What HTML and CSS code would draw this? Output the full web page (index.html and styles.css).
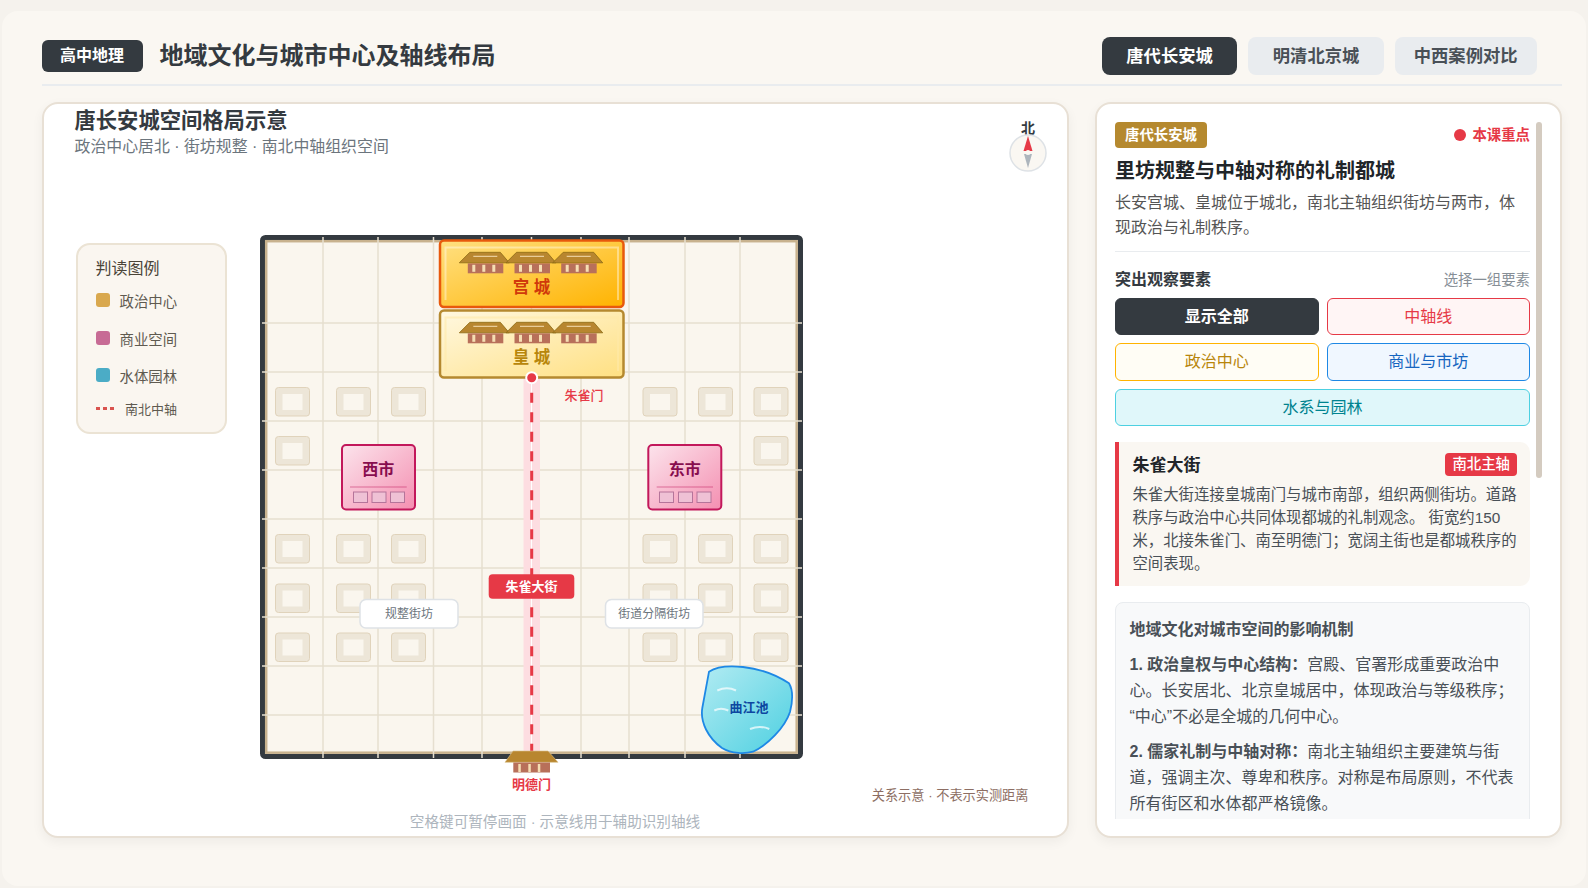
FILE: index.html
```html
<!DOCTYPE html>
<html lang="zh-CN">
<head>
  <meta charset="UTF-8">
  <meta name="viewport" content="width=device-width, initial-scale=1.0">
  <title>地域文化与城市中心及轴线布局</title>
  <link rel="stylesheet" href="styles.css">
</head>
<body>
  <div class="app">
    <!-- Header -->
    <header class="top-bar">
      <span class="subject-badge">高中地理</span>
      <h1 class="page-title">地域文化与城市中心及轴线布局</h1>
      <nav class="case-nav">
        <button class="case-btn active">唐代长安城</button>
        <button class="case-btn">明清北京城</button>
        <button class="case-btn">中西案例对比</button>
      </nav>
    </header>

    <main class="main-row">
      <!-- Map panel -->
      <section class="panel map-panel">
        <div class="map-head">
          <h2>唐长安城空间格局示意</h2>
          <p>政治中心居北 · 街坊规整 · 南北中轴组织空间</p>
        </div>

        <div class="compass">
          <span>北</span>
          <svg width="38" height="38" viewBox="0 0 38 38">
            <circle cx="19" cy="19" r="18" fill="#faf7f2" stroke="#dee2e6" stroke-width="1.5"/>
            <polygon points="19,2 23.5,17 14.5,17" fill="#e63946"/>
            <polygon points="19,34 23,20 15,20" fill="#adb5bd"/>
            <circle cx="19" cy="18.5" r="2.5" fill="#faf7f2"/>
          </svg>
        </div>

        <div class="map-stage">
          <aside class="legend">
            <h4>判读图例</h4>
            <div class="legend-item"><i class="swatch gold"></i><span>政治中心</span></div>
            <div class="legend-item"><i class="swatch rose"></i><span>商业空间</span></div>
            <div class="legend-item"><i class="swatch teal"></i><span>水体园林</span></div>
            <div class="legend-item axis-item"><i class="dash"></i><span>南北中轴</span></div>
          </aside>

          <svg class="city-map" width="547" height="562" viewBox="258 233 547 562">
            <defs>
              <linearGradient id="palaceFill" x1="0" y1="0" x2="1" y2="1">
                <stop offset="0" stop-color="#ffe082"/>
                <stop offset="1" stop-color="#ffb300"/>
              </linearGradient>
              <linearGradient id="imperialFill" x1="0" y1="0" x2="1" y2="1">
                <stop offset="0" stop-color="#fff8e1"/>
                <stop offset="1" stop-color="#ffe082"/>
              </linearGradient>
              <linearGradient id="marketFill" x1="0" y1="0" x2="1" y2="1">
                <stop offset="0" stop-color="#fce4ec"/>
                <stop offset="1" stop-color="#f48fb1"/>
              </linearGradient>
              <linearGradient id="pondFill" x1="0" y1="0" x2="1" y2="1">
                <stop offset="0" stop-color="#b2ebf2"/>
                <stop offset="1" stop-color="#4dd0e1"/>
              </linearGradient>
              <g id="ward">
                <rect x="0.5" y="0.5" width="34" height="28.5" rx="3" fill="#ede6d8" stroke="#e0d3bb"/>
                <rect x="7.5" y="7" width="20" height="16" fill="#faf6ee"/>
              </g>
              <g id="hall">
                <polygon points="10.5,0 41,0 50,10.5 0,10.5" fill="#b8862f" stroke="#8b6914" stroke-width="0.8"/>
                <line x1="14" y1="4" x2="38" y2="4" stroke="#f5deb3"/>
                <rect x="8.5" y="11" width="35.5" height="10" fill="#b8705a"/>
                <rect x="13" y="12.5" width="3" height="7" fill="#f5deb3"/>
                <rect x="23" y="12.5" width="3" height="7" fill="#f5deb3"/>
                <rect x="33" y="12.5" width="3" height="7" fill="#f5deb3"/>
              </g>
            </defs>

            <!-- city wall -->
            <rect x="262.5" y="237.5" width="538" height="519" rx="3" fill="#faf6ee" stroke="#343a40" stroke-width="5"/>
            <rect x="266.2" y="241.2" width="530.5" height="511.5" fill="none" stroke="#c8b28e" stroke-width="2.5"/>

            <!-- street grid -->
            <path class="grid-lines" d="M323 237V758M378 237V758M433.5 237V758M482 237V758M531.5 237V758M581 237V758M629 237V758M685 237V758M740 237V758M262 323H802M262 372H802M262 421H802M262 470H802M262 519H802M262 568H802M262 617H802M262 666H802M262 715H802"/>

            <!-- wards, west side -->
            <use href="#ward" x="275" y="387"/>
            <use href="#ward" x="336" y="387"/>
            <use href="#ward" x="391" y="387"/>
            <use href="#ward" x="275" y="436"/>
            <use href="#ward" x="275" y="534"/>
            <use href="#ward" x="336" y="534"/>
            <use href="#ward" x="391" y="534"/>
            <use href="#ward" x="275" y="583.5"/>
            <use href="#ward" x="336" y="583.5"/>
            <use href="#ward" x="391" y="583.5"/>
            <use href="#ward" x="275" y="632.5"/>
            <use href="#ward" x="336" y="632.5"/>
            <use href="#ward" x="391" y="632.5"/>

            <!-- wards, east side -->
            <use href="#ward" x="642.5" y="387"/>
            <use href="#ward" x="698" y="387"/>
            <use href="#ward" x="753.5" y="387"/>
            <use href="#ward" x="753.5" y="436"/>
            <use href="#ward" x="642.5" y="534"/>
            <use href="#ward" x="698" y="534"/>
            <use href="#ward" x="753.5" y="534"/>
            <use href="#ward" x="642.5" y="583.5"/>
            <use href="#ward" x="698" y="583.5"/>
            <use href="#ward" x="753.5" y="583.5"/>
            <use href="#ward" x="642.5" y="632.5"/>
            <use href="#ward" x="698" y="632.5"/>
            <use href="#ward" x="753.5" y="632.5"/>

            <!-- central axis -->
            <rect x="523.5" y="378" width="16.5" height="374" fill="#fddde1"/>
            <line x1="531.5" y1="378" x2="531.5" y2="752" stroke="#fff" stroke-width="1"/>
            <line x1="531.7" y1="392.7" x2="531.7" y2="752" stroke="#e63946" stroke-width="3" stroke-dasharray="10 9.5"/>

            <!-- palace city -->
            <rect x="440" y="240.5" width="183.5" height="66.5" rx="4" fill="url(#palaceFill)" stroke="#e8590c" stroke-width="2.5"/>
            <path d="M445.5 300V247.5H618V300" fill="none" stroke="#fff" stroke-opacity="0.4" stroke-width="2"/>
            <use href="#hall" x="459.3" y="252.3"/>
            <use href="#hall" x="506" y="252.3"/>
            <use href="#hall" x="552.7" y="252.3"/>
            <text class="t-palace" x="531.5" y="287">宫 城</text>

            <!-- imperial city -->
            <rect x="440" y="310.5" width="183.5" height="67" rx="4" fill="url(#imperialFill)" stroke="#b5892f" stroke-width="2.5"/>
            <path d="M445.5 371V317.5H618V371" fill="none" stroke="#ffe9a8" stroke-opacity="0.6" stroke-width="2"/>
            <use href="#hall" x="459.3" y="322.3"/>
            <use href="#hall" x="506" y="322.3"/>
            <use href="#hall" x="552.7" y="322.3"/>
            <text class="t-imperial" x="531.5" y="357">皇 城</text>

            <circle cx="531.7" cy="377.7" r="5.5" fill="#e63946" stroke="#fff" stroke-width="2"/>
            <text class="t-gate" x="584" y="395.7">朱雀门</text>

            <!-- markets -->
            <rect x="342" y="445" width="73" height="64.5" rx="4" fill="url(#marketFill)" stroke="#c2185b" stroke-width="2"/>
            <text class="t-market" x="378.3" y="469.5">西市</text>
            <line x1="350" y1="487" x2="406.7" y2="487" class="market-rule"/>
            <rect class="stall" x="353.5" y="492" width="14" height="10.5"/>
            <rect class="stall" x="372" y="492" width="14" height="10.5"/>
            <rect class="stall" x="390.5" y="492" width="14" height="10.5"/>

            <rect x="648.3" y="445" width="73" height="64.5" rx="4" fill="url(#marketFill)" stroke="#c2185b" stroke-width="2"/>
            <text class="t-market" x="684.8" y="469.5">东市</text>
            <line x1="656.7" y1="487" x2="713" y2="487" class="market-rule"/>
            <rect class="stall" x="659.5" y="492" width="14" height="10.5"/>
            <rect class="stall" x="678.5" y="492" width="14" height="10.5"/>
            <rect class="stall" x="697" y="492" width="14" height="10.5"/>

            <!-- street labels -->
            <rect x="488.7" y="574.3" width="85.6" height="24.4" rx="4" fill="#e63946"/>
            <text class="t-street" x="531.5" y="586.5">朱雀大街</text>
            <rect class="tag-box" x="360" y="599.5" width="98" height="28.5" rx="6"/>
            <text class="t-tag" x="409" y="613.7">规整街坊</text>
            <rect class="tag-box" x="605.5" y="599.5" width="97.5" height="28.5" rx="6"/>
            <text class="t-tag" x="654.2" y="613.7">街道分隔街坊</text>

            <!-- Qujiang pond -->
            <path d="M709 671.7C722 663 760 664 789 683.3C793 690 793 700 790 712C785 727 768 745 753 751.7C745 754 732 754 722 748C708 738 700 722 702.3 708Z" fill="url(#pondFill)" stroke="#1e88e5" stroke-width="1.8"/>
            <path class="wave" d="M717.3 690.5Q727 686 736 690.5M714.3 710.5Q721 707 728.3 710.5M750 729Q760 725 769.3 729"/>
            <text class="t-pond" x="749" y="707.5">曲江池</text>

            <!-- south gate -->
            <polygon points="513,751 548,751 558,762.3 505,762.3" fill="#b8862f" stroke="#d9c089" stroke-width="0.6"/>
            <rect x="513.3" y="762.5" width="36.7" height="10" fill="#b8705a"/>
            <rect x="518.3" y="764" width="2.5" height="8" fill="#f5deb3"/>
            <rect x="528.3" y="764" width="2.5" height="8" fill="#f5deb3"/>
            <rect x="537.8" y="764" width="2.5" height="8" fill="#f5deb3"/>
            <text class="t-south" x="531.5" y="784.5">明德门</text>
          </svg>
        </div>

        <p class="scale-note">关系示意 · 不表示实测距离</p>
        <p class="map-hint">空格键可暂停画面 · 示意线用于辅助识别轴线</p>
      </section>

      <!-- Side panel -->
      <section class="panel side-panel">
        <div class="side-scroll">
          <div class="side-top">
            <span class="era-tag">唐代长安城</span>
            <span class="key-point"><i></i>本课重点</span>
          </div>
          <h3 class="side-title">里坊规整与中轴对称的礼制都城</h3>
          <p class="side-desc">长安宫城、皇城位于城北&#xFF0C;南北主轴组织街坊与两市&#xFF0C;体现政治与礼制秩序。</p>

          <div class="filter-head">
            <strong>突出观察要素</strong>
            <span>选择一组要素</span>
          </div>
          <div class="filter-grid">
            <button class="filter-btn f-all">显示全部</button>
            <button class="filter-btn f-axis">中轴线</button>
            <button class="filter-btn f-politics">政治中心</button>
            <button class="filter-btn f-market">商业与市坊</button>
            <button class="filter-btn f-water">水系与园林</button>
          </div>

          <div class="info-card">
            <div class="info-card-head">
              <h4>朱雀大街</h4>
              <span>南北主轴</span>
            </div>
            <p>朱雀大街连接皇城南门与城市南部&#xFF0C;组织两侧街坊。道路秩序与政治中心共同体现都城的礼制观念。 街宽约150米&#xFF0C;北接朱雀门、南至明德门&#xFF1B;宽阔主街也是都城秩序的空间表现。</p>
          </div>

          <div class="mechanism">
            <h4>地域文化对城市空间的影响机制</h4>
            <p><b>1. 政治皇权与中心结构&#xFF1A;</b>宫殿、官署形成重要政治中心。长安居北、北京皇城居中&#xFF0C;体现政治与等级秩序&#xFF1B;“中心”不必是全城的几何中心。</p>
            <p><b>2. 儒家礼制与中轴对称&#xFF1A;</b>南北主轴组织主要建筑与街道&#xFF0C;强调主次、尊卑和秩序。对称是布局原则&#xFF0C;不代表所有街区和水体都严格镜像。</p>
          </div>
        </div>
        <div class="scroll-thumb"></div>
      </section>
    </main>
  </div>
</body>
</html>
```

FILE: styles.css
```css
* {
  box-sizing: border-box;
}

html,
body {
  height: 100%;
}

body {
  margin: 0;
  overflow: hidden;
  background-color: #f5f2ed;
  color: #343a40;
  font-family: "Liberation Sans", "Noto Sans CJK SC", sans-serif;
}

button {
  font-family: inherit;
}

.app {
  height: 875px;
  margin: 11px 2px 2px;
  padding: 26px 24px 0 39.5px;
  background-color: #faf7f2;
  border-radius: 16px;
}

/* Header */
.top-bar {
  display: flex;
  align-items: center;
  height: 49px;
  padding-bottom: 9px;
  margin-bottom: 15.5px;
  border-bottom: 2px solid #e9ecef;
}

.subject-badge {
  display: flex;
  align-items: center;
  justify-content: center;
  width: 101px;
  height: 32px;
  background-color: #343a40;
  color: #fff;
  font-size: 16px;
  line-height: 20px;
  font-weight: 700;
  border-radius: 6px;
}

.page-title {
  margin: 0 0 0 17px;
  font-size: 24px;
  line-height: 30px;
  font-weight: 700;
  color: #343a40;
}

.case-nav {
  display: flex;
  gap: 11px;
  margin-left: auto;
  margin-right: 25.5px;
}

.case-btn {
  min-width: 135.5px;
  height: 38px;
  padding: 0 19px;
  border: none;
  border-radius: 8px;
  background-color: #e9ecef;
  color: #495057;
  font-size: 17.3px;
  line-height: 22px;
  font-weight: 700;
}

.case-btn.active {
  background-color: #343a40;
  color: #fff;
}

/* Panels */
.main-row {
  display: flex;
  gap: 26.5px;
}

.panel {
  height: 736px;
  background-color: #fff;
  border: 2px solid #e8e0d5;
  border-radius: 16px;
  box-shadow: 0 4px 12px rgba(0, 0, 0, 0.05);
}

.map-panel {
  position: relative;
  display: flex;
  flex-direction: column;
  width: 1027px;
}

.map-head {
  padding: 4.5px 0 0 31px;
}

.map-head h2 {
  margin: 0;
  font-size: 21.3px;
  line-height: 26px;
  font-weight: 700;
  color: #343a40;
}

.map-head p {
  margin: 0;
  font-size: 15.9px;
  line-height: 26px;
  color: #6c757d;
}

.compass {
  position: absolute;
  top: 16.5px;
  right: 19.5px;
  width: 38px;
  text-align: center;
}

.compass span {
  display: block;
  height: 14px;
  font-size: 14px;
  line-height: 16px;
  font-weight: 700;
  color: #343a40;
}

.compass svg {
  display: block;
}

.map-stage {
  display: flex;
  align-items: flex-start;
  flex: 1;
  padding: 73px 0 0 32px;
}

.legend {
  flex: none;
  width: 151px;
  height: 191px;
  margin: 10px 31px 0 0;
  padding: 13px 18px;
  background-color: #faf6f0;
  border: 2px solid #ebe3d4;
  border-radius: 14px;
}

.legend h4 {
  margin: 0 0 12px;
  font-size: 16px;
  line-height: 22px;
  font-weight: 400;
  color: #4a4438;
}

.legend-item {
  display: flex;
  height: 37.5px;
  font-size: 14.4px;
  line-height: 20px;
  color: #5f5a50;
}

.legend-item span {
  margin-left: 10px;
}

.swatch {
  width: 14px;
  height: 14px;
  margin-top: 1px;
  border-radius: 3px;
}

.swatch.gold {
  background-color: #d9a84e;
}

.swatch.rose {
  background-color: #c76b95;
}

.swatch.teal {
  background-color: #4bacc6;
}

.axis-item {
  margin-top: -4.5px;
}

.axis-item span {
  margin-left: 11.5px;
  font-size: 13px;
}

.dash {
  width: 18px;
  height: 3px;
  margin-top: 7px;
  background: repeating-linear-gradient(to right, #d9534f 0 4px, transparent 4px 7px);
}

.city-map {
  flex: none;
  display: block;
}

.city-map text {
  text-anchor: middle;
  dominant-baseline: central;
}

.grid-lines {
  fill: none;
  stroke: #e6dfd0;
  stroke-width: 1.5;
}

.t-palace,
.t-imperial {
  font-size: 16.5px;
  font-weight: 700;
}

.t-palace {
  fill: #d0390b;
}

.t-imperial {
  fill: #b8860b;
}

.t-gate {
  font-size: 13px;
  font-weight: 500;
  fill: #e63946;
}

.t-south {
  font-size: 13px;
  font-weight: 700;
  fill: #e63946;
}

.t-market {
  font-size: 16px;
  font-weight: 700;
  fill: #880e4f;
}

.market-rule {
  stroke: #c2185b;
  stroke-opacity: 0.5;
  stroke-width: 1.2;
}

.stall {
  fill: #efc1d5;
  stroke: #b5749a;
}

.t-street {
  font-size: 13px;
  font-weight: 700;
  fill: #fff;
}

.tag-box {
  fill: #fff;
  stroke: #dee2e6;
  stroke-width: 1.5;
}

.t-tag {
  font-size: 12px;
  fill: #6c757d;
}

.wave {
  fill: none;
  stroke: #fff;
  stroke-opacity: 0.7;
  stroke-width: 2;
}

.t-pond {
  font-size: 13px;
  font-weight: 700;
  fill: #0d47a1;
}

.scale-note {
  position: absolute;
  right: 38px;
  bottom: 30px;
  margin: 0;
  font-size: 13.2px;
  line-height: 20px;
  color: #8d6e63;
}

.map-hint {
  margin: 0;
  padding-bottom: 4px;
  text-align: center;
  font-size: 14.6px;
  line-height: 20px;
  color: #adb5bd;
}

/* Side panel */
.side-panel {
  position: relative;
  width: 466.5px;
  padding: 18px 18px 17px;
}

.side-scroll {
  height: 100%;
  overflow: hidden;
  padding-right: 11.5px;
}

.scroll-thumb {
  position: absolute;
  top: 18px;
  right: 18px;
  width: 6px;
  height: 356px;
  background-color: #d4cbc0;
  border-radius: 3px;
}

.side-top {
  display: flex;
  align-items: center;
  justify-content: space-between;
}

.era-tag {
  height: 26px;
  padding: 0 10px;
  background-color: #b5892f;
  color: #fff;
  font-size: 14.4px;
  line-height: 27px;
  font-weight: 700;
  border-radius: 4px;
}

.key-point {
  display: flex;
  align-items: center;
  gap: 6px;
  padding-top: 1px;
  font-size: 14.4px;
  line-height: 20px;
  font-weight: 600;
  color: #e63946;
}

.key-point i {
  width: 12px;
  height: 12px;
  border-radius: 50%;
  background-color: #e63946;
}

.side-title {
  margin: 8px 0 0;
  font-size: 20px;
  line-height: 30px;
  font-weight: 700;
  color: #212529;
}

.side-desc {
  margin: 4px 0 0;
  padding-bottom: 10px;
  border-bottom: 1px solid #e9ecef;
  font-size: 16px;
  line-height: 25.6px;
  color: #555;
}

.filter-head {
  display: flex;
  align-items: center;
  justify-content: space-between;
  height: 24px;
  margin-top: 16px;
}

.filter-head strong {
  font-size: 16px;
  line-height: 20px;
  font-weight: 700;
  color: #343a40;
}

.filter-head span {
  font-size: 14.4px;
  line-height: 20px;
  color: #868e96;
}

.filter-grid {
  display: grid;
  grid-template-columns: 1fr 1fr;
  gap: 8px;
  margin-top: 6px;
}

.filter-btn {
  height: 37.5px;
  padding: 1px 0 0;
  border: 1.5px solid;
  border-radius: 6px;
  font-size: 16px;
  line-height: 20px;
  font-weight: 400;
}

.f-all {
  background-color: #343a40;
  border-color: #343a40;
  color: #fff;
  font-weight: 700;
}

.f-axis {
  background-color: #fff5f5;
  border-color: #e63946;
  color: #e63946;
}

.f-politics {
  background-color: #fffdf5;
  border-color: #ffb300;
  color: #b8860b;
}

.f-market {
  background-color: #f0f7ff;
  border-color: #1e88e5;
  color: #1565c0;
}

.f-water {
  grid-column: span 2;
  background-color: #e0f7fa;
  border-color: #4dd0e1;
  color: #00838f;
}

.info-card {
  margin-top: 15.5px;
  padding: 11px 13px 10.5px 13.5px;
  background-color: #faf7f2;
  border-left: 4px solid #e63946;
  border-radius: 0 10px 10px 0;
}

.info-card-head {
  display: flex;
  align-items: center;
  justify-content: space-between;
}

.info-card-head h4 {
  margin: 0;
  padding-top: 1px;
  font-size: 17px;
  line-height: 23px;
  font-weight: 700;
  color: #212529;
}

.info-card-head span {
  height: 23px;
  padding: 0 7px;
  background-color: #e63946;
  color: #fff;
  font-size: 14.4px;
  line-height: 23px;
  font-weight: 500;
  border-radius: 4px;
}

.info-card p {
  margin: 6px 0 0;
  font-size: 15.36px;
  line-height: 23.1px;
  color: #495057;
}

.mechanism {
  margin-top: 16.5px;
  padding: 15px 13.5px 10px;
  background-color: #f8f9fa;
  border: 1px solid #e9ecef;
  border-radius: 8px;
}

.mechanism h4 {
  margin: 0;
  font-size: 16px;
  line-height: 24px;
  font-weight: 700;
  color: #495057;
}

.mechanism p {
  margin: 9.5px 0 0;
  font-size: 16px;
  line-height: 26px;
  color: #495057;
}

.mechanism b {
  font-weight: 700;
}
```
